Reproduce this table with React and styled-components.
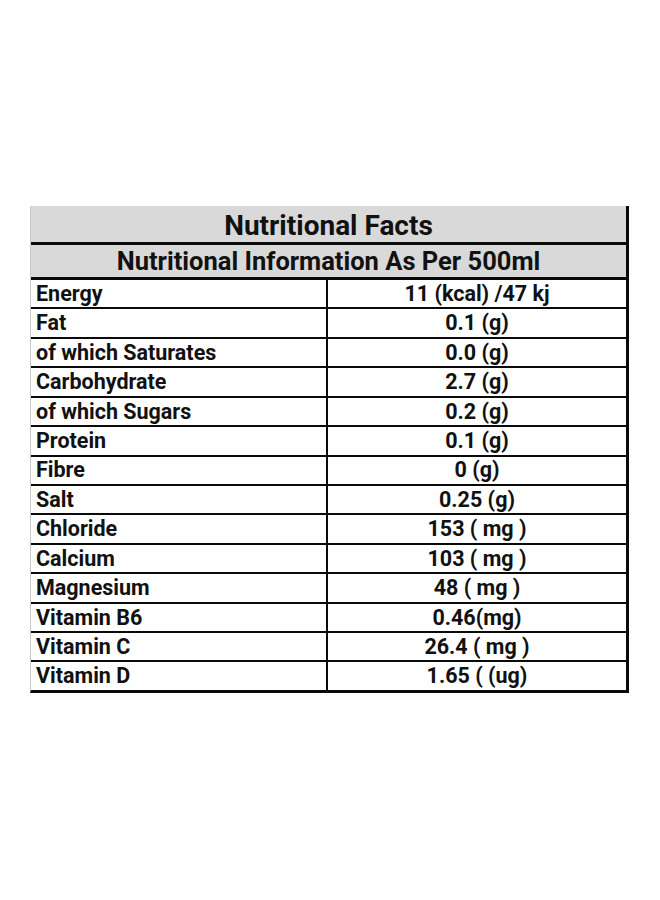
import React from 'react'
import styled, { createGlobalStyle } from 'styled-components'

const GlobalStyle = createGlobalStyle`
  html, body {
    margin: 0;
    padding: 0;
    background: #ffffff;
  }
  body {
    font-family: Roboto, "Liberation Sans", Arial, sans-serif;
    color: #111111;
  }
`

const Page = styled.div`
  width: 660px;
  height: 900px;
  padding: 206px 0 0 30px;
  box-sizing: border-box;
`

const Table = styled.div`
  width: 599px;
  box-sizing: border-box;
  border-left: 1px solid #c8c8c8;
  border-right: 3px solid #0a0a0a;
  border-bottom: 3px solid #0a0a0a;
`

const HeaderRow = styled.div`
  background: #d9d9d9;
  height: ${p => p.$height}px;
  padding-top: ${p => p.$shift}px;
  box-sizing: border-box;
  border-bottom: 3px solid #0a0a0a;
  display: flex;
  align-items: center;
  justify-content: center;
  font-weight: 700;
  font-size: ${p => p.$size}px;
  line-height: 1;
`

const Row = styled.div`
  display: grid;
  grid-template-columns: 297px 1fr;
  height: 29.43px;
  box-sizing: border-box;
  border-bottom: 2px solid #0a0a0a;
  &:last-child {
    border-bottom: none;
    height: 27.43px;
  }
`

const Cell = styled.div`
  display: flex;
  align-items: center;
  justify-content: ${p => (p.$center ? 'center' : 'flex-start')};
  padding-left: ${p => (p.$center ? 0 : 5)}px;
  font-weight: 700;
  font-size: 21.5px;
  line-height: 1;
  border-right: ${p => (p.$center ? 'none' : '2px solid #0a0a0a')};
`

const rows = [
  ['Energy', '11 (kcal) /47 kj'],
  ['Fat', '0.1 (g)'],
  ['of which Saturates', '0.0 (g)'],
  ['Carbohydrate', '2.7 (g)'],
  ['of which Sugars', '0.2 (g)'],
  ['Protein', '0.1 (g)'],
  ['Fibre', '0 (g)'],
  ['Salt', '0.25 (g)'],
  ['Chloride', '153 ( mg )'],
  ['Calcium', '103 ( mg )'],
  ['Magnesium', '48 ( mg )'],
  ['Vitamin B6', '0.46(mg)'],
  ['Vitamin C', '26.4 ( mg )'],
  ['Vitamin D', '1.65 ( (ug)'],
]

export default function App() {
  return (
    <Page>
      <GlobalStyle />
      <Table>
        <HeaderRow $height={39} $shift={4} $size={28}>Nutritional Facts</HeaderRow>
        <HeaderRow $height={35} $shift={2} $size={25.5}>Nutritional Information As Per 500ml</HeaderRow>
        {rows.map(([name, value]) => (
          <Row key={name}>
            <Cell>{name}</Cell>
            <Cell $center>{value}</Cell>
          </Row>
        ))}
      </Table>
    </Page>
  )
}
